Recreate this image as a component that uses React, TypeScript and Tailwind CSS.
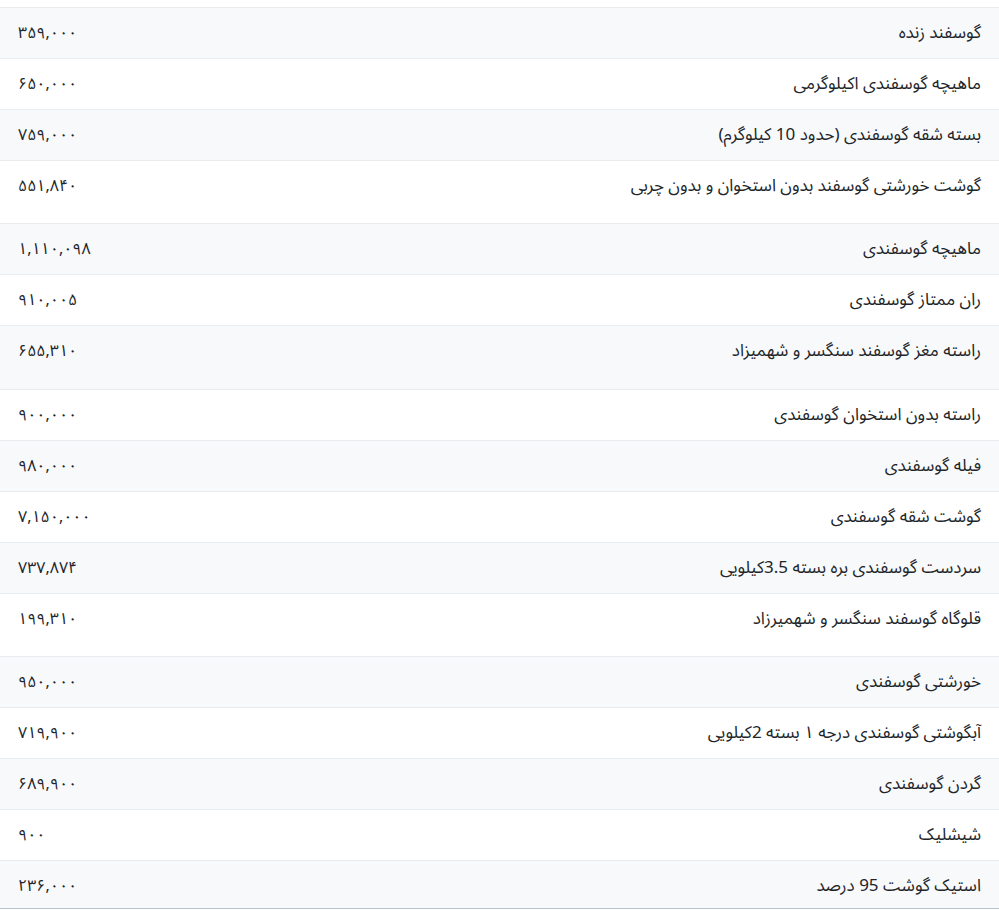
const rows: { name: string; price: string; h: string }[] = [
  { name: "گوسفند زنده", price: "۳۵۹,۰۰۰", h: "h-[51px]" },
  { name: "ماهیچه گوسفندی اکیلوگرمی", price: "۶۵۰,۰۰۰", h: "h-[51px]" },
  { name: "بسته شقه گوسفندی (حدود 10 کیلوگرم)", price: "۷۵۹,۰۰۰", h: "h-[51px]" },
  { name: "گوشت خورشتی گوسفند بدون استخوان و بدون چربی", price: "۵۵۱,۸۴۰", h: "h-[63px]" },
  { name: "ماهیچه گوسفندی", price: "۱,۱۱۰,۰۹۸", h: "h-[51px]" },
  { name: "ران ممتاز گوسفندی", price: "۹۱۰,۰۰۵", h: "h-[51px]" },
  { name: "راسته مغز گوسفند سنگسر و شهمیزاد", price: "۶۵۵,۳۱۰", h: "h-[64px]" },
  { name: "راسته بدون استخوان گوسفندی", price: "۹۰۰,۰۰۰", h: "h-[51px]" },
  { name: "فیله گوسفندی", price: "۹۸۰,۰۰۰", h: "h-[51px]" },
  { name: "گوشت شقه گوسفندی", price: "۷,۱۵۰,۰۰۰", h: "h-[51px]" },
  { name: "سردست گوسفندی بره بسته 3.5کیلویی", price: "۷۳۷,۸۷۴", h: "h-[51px]" },
  { name: "قلوگاه گوسفند سنگسر و شهمیرزاد", price: "۱۹۹,۳۱۰", h: "h-[63px]" },
  { name: "خورشتی گوسفندی", price: "۹۵۰,۰۰۰", h: "h-[51px]" },
  { name: "آبگوشتی گوسفندی درجه ۱ بسته 2کیلویی", price: "۷۱۹,۹۰۰", h: "h-[51px]" },
  { name: "گردن گوسفندی", price: "۶۸۹,۹۰۰", h: "h-[51px]" },
  { name: "شیشلیک", price: "۹۰۰", h: "h-[51px]" },
  { name: "استیک گوشت 95 درصد", price: "۲۳۶,۰۰۰", h: "h-[48px]" },
];

export default function App() {
  return (
    <div
      dir="rtl"
      className="w-[999px] bg-white pt-[7px] text-[#212529]"
      style={{ fontFamily: '"Noto Sans Arabic", "Noto Naskh Arabic", "DejaVu Sans", sans-serif' }}
    >
      <div className="border-b border-[#b9c0cf]">
        {rows.map((row, i) => (
          <div
            key={row.name}
            className={`flex items-start justify-between border-t border-[#e9ecef] px-[18px] ${row.h} ${
              i % 2 === 0 ? "bg-[#f8f9fb]" : "bg-white"
            }`}
          >
            <span className="text-[17px] leading-[50px]">{row.name}</span>
            <span className="text-[16px] leading-[50px]">{row.price}</span>
          </div>
        ))}
      </div>
    </div>
  );
}
